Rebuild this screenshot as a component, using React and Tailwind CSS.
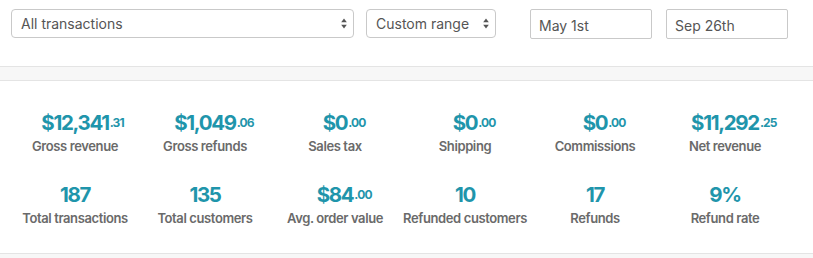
import React from "react";

function Arrows() {
  return (
    <svg width="6" height="11" viewBox="0 0 6 11" className="shrink-0">
      <path d="M3 0.5 L5.8 4.3 L0.2 4.3 Z" fill="#555" />
      <path d="M3 10.5 L5.8 6.7 L0.2 6.7 Z" fill="#555" />
    </svg>
  );
}

function Stat({ value, cents, label }) {
  return (
    <div className="flex flex-col items-center">
      <div className="text-[#1f95ab] font-bold h-[28px] leading-[28px]">
        <span className="relative text-[20.5px] tracking-[-0.065em]">
          {value}
          {cents && (
            <span className="absolute left-full top-[-1px] ml-[1px] text-[12px] tracking-[-0.07em]">{cents}</span>
          )}
        </span>
      </div>
      <div className="text-[13px] font-semibold text-[#6a6a6a] tracking-[-0.03em] leading-[18px]">{label}</div>
    </div>
  );
}

export default function App() {
  const row1 = [
    ["$12,341", ".31", "Gross revenue"],
    ["$1,049", ".06", "Gross refunds"],
    ["$0", ".00", "Sales tax"],
    ["$0", ".00", "Shipping"],
    ["$0", ".00", "Commissions"],
    ["$11,292", ".25", "Net revenue"],
  ];
  const row2 = [
    ["187", null, "Total transactions"],
    ["135", null, "Total customers"],
    ["$84", ".00", "Avg. order value"],
    ["10", null, "Refunded customers"],
    ["17", null, "Refunds"],
    ["9%", null, "Refund rate"],
  ];
  return (
    <div className="w-[813px] h-[258px] bg-white overflow-hidden" style={{ fontFamily: "Inter, 'Noto Sans', sans-serif" }}>
      <div className="h-[66px] flex items-start pt-[9px] pl-[11px]">
        <div className="w-[343px] h-[29px] border border-[#c9c9c9] rounded-[4px] flex items-center justify-between pl-[9px] pr-[6px] text-[14px] text-[#555]">
          <span>All transactions</span>
          <Arrows />
        </div>
        <div className="ml-[12px] w-[130px] h-[29px] border border-[#c9c9c9] rounded-[4px] flex items-center justify-between pl-[9px] pr-[6px] text-[14px] text-[#555]">
          <span>Custom range</span>
          <Arrows />
        </div>
        <div className="ml-[34px] w-[122px] h-[30px] border border-[#c9c9c9] rounded-[2px] flex items-center pl-[8px] pt-[2px] text-[14px] text-[#555]">
          May 1st
        </div>
        <div className="ml-[14px] w-[122px] h-[30px] border border-[#c9c9c9] rounded-[2px] flex items-center pl-[8px] pt-[2px] text-[14px] text-[#555]">
          Sep 26th
        </div>
      </div>
      <div className="h-[15px] bg-[#f7f7f7] border-y border-[#e4e4e4]"></div>
      <div className="h-[173px] border-b border-[#e4e4e4] pt-[28px]">
        <div className="grid grid-cols-6 w-[780px] ml-[10px] gap-y-[26px]">
          {row1.map(([v, c, l]) => (
            <Stat key={l} value={v} cents={c} label={l} />
          ))}
          {row2.map(([v, c, l]) => (
            <Stat key={l} value={v} cents={c} label={l} />
          ))}
        </div>
      </div>
      <div className="h-[4px] bg-[#f7f7f7]"></div>
    </div>
  );
}
